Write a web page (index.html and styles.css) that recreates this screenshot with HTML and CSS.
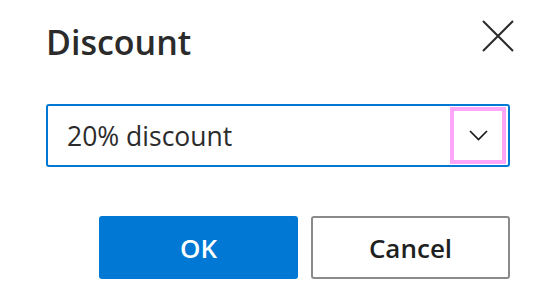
FILE: index.html
```html
<!DOCTYPE html>
<html>
<head>
<meta charset="utf-8">
<link rel="stylesheet" href="styles.css">
</head>
<body>
<div class="dialog">
  <div class="header">
    <h1 class="title">Discount</h1>
    <button class="close" aria-label="Close">
      <svg width="32" height="32" viewBox="0 0 32 32"><path d="M1 1 L31 31 M31 1 L1 31" stroke="#2b2b2b" stroke-width="2" fill="none"/></svg>
    </button>
  </div>
  <div class="select">
    <span class="value">20% discount</span>
    <span class="chev">
      <svg width="19" height="11" viewBox="0 0 19 11"><path d="M1 1 L9.5 9.5 L18 1" stroke="#1a1a1a" stroke-width="1.7" fill="none"/></svg>
    </span>
  </div>
  <div class="actions">
    <button class="btn primary">OK</button>
    <button class="btn secondary">Cancel</button>
  </div>
</div>
</body>
</html>
```
FILE: styles.css
```css
html, body { margin: 0; padding: 0; background: #fff; }
body { font-family: "Open Sans", "Noto Sans", sans-serif; color: #2b2b2b; }
.dialog { width: 554px; height: 300px; box-sizing: border-box; padding: 18px 40px 0 46px; }
.header { display: flex; justify-content: space-between; align-items: flex-start; height: 86px; }
.title { margin: 0; font-size: 34px; font-weight: 600; line-height: 48px; padding-left: 0; color: #2b2b2b; }
.close { border: 0; background: none; padding: 0; margin: 2px 0 0 0; width: 32px; height: 32px; display: block; }
.close svg { display: block; }
.select { width: 464px; height: 63px; box-sizing: border-box; border: 2px solid #0078d4; border-radius: 3px; display: flex; align-items: stretch; padding: 1px 2px 1px 0; }
.value { flex: 1; display: flex; align-items: center; padding-left: 19px; font-size: 26.5px; color: #2b2b2b; }
.chev { width: 56px; box-sizing: border-box; border: 4px solid #fda6f8; display: flex; align-items: center; justify-content: center; }
.chev svg { display: block; }
.actions { display: flex; justify-content: flex-end; gap: 13px; margin-top: 49px; width: 464px; }
.btn { width: 199px; height: 63px; box-sizing: border-box; border-radius: 3px; font-family: "Open Sans", "Noto Sans", sans-serif; font-size: 26px; font-weight: 600; padding: 0; }
.primary { background: #0078d4; color: #fff; border: 0; }
.secondary { background: #fff; color: #1f1f1f; border: 2px solid #8a8a8a; }
```
